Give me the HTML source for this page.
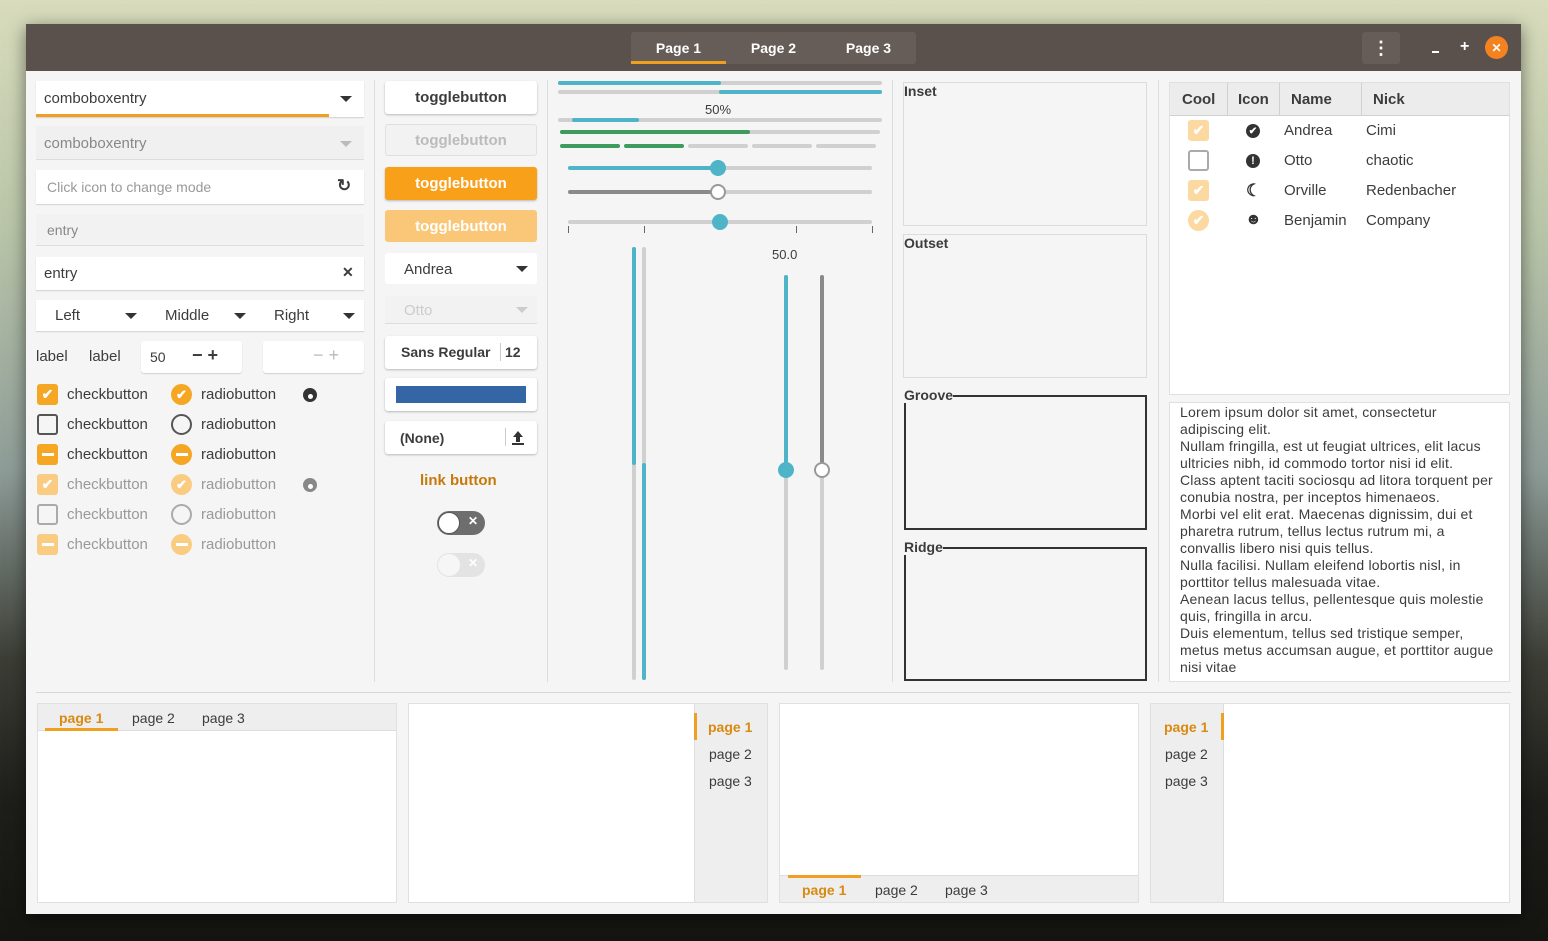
<!DOCTYPE html>
<html><head><meta charset="utf-8"><style>
*{box-sizing:border-box;margin:0;padding:0}
body{width:1548px;height:941px;overflow:hidden;position:relative;font-family:"Liberation Sans",sans-serif;font-size:14px;color:#3c3c3c;
background:linear-gradient(180deg,#d8dcbc 0%,#b8c4a8 25%,#8e9c98 50%,#3c3e36 70%,#1e1e1a 85%,#141410 100%)}
.a{position:absolute}
.win{left:26px;top:24px;width:1495px;height:890px;background:#f5f5f5;box-shadow:0 4px 16px rgba(0,0,0,.5)}
.tb{left:26px;top:24px;width:1495px;height:47px;background:#5a514c}
.btn{background:#fff;border-radius:3px;box-shadow:0 1px 2px rgba(0,0,0,.25);}
.wt{color:#fff;font-weight:bold;font-size:14px}
.ent{background:#fff;box-shadow:0 1px 1px rgba(0,0,0,.15)}
.c{display:flex;align-items:center;justify-content:center}
.tri{width:0;height:0;border-left:6px solid transparent;border-right:6px solid transparent;border-top:6px solid #333}
.cb{width:21px;height:21px;border-radius:3px}
.rb{width:21px;height:21px;border-radius:50%}
.bar{height:4px;border-radius:2px}
.b{font-weight:bold}
.frame{background:#f5f5f5;border:1px solid #dcdcdc}
</style></head><body>
<div class="a win"></div>
<div class="a tb"></div>
<div class="a" style="left:631px;top:32px;width:285px;height:32px;background:#665d58;border-radius:3px"></div>
<div class="a wt c" style="left:631px;top:32px;width:95px;height:32px">Page 1</div>
<div class="a" style="left:631px;top:61px;width:95px;height:3px;background:#f0a020"></div>
<div class="a wt c" style="left:726px;top:32px;width:95px;height:32px">Page 2</div>
<div class="a wt c" style="left:821px;top:32px;width:95px;height:32px">Page 3</div>
<div class="a c" style="left:1362px;top:32px;width:38px;height:32px;background:#665d58;border-radius:3px;color:#fff;font-weight:bold;font-size:18px">⋮</div>
<div class="a" style="left:1432px;top:51px;width:7px;height:2px;background:#fff"></div>
<div class="a wt" style="left:1460px;top:38px;font-size:16px">+</div>
<div class="a c" style="left:1485px;top:36px;width:23px;height:23px;border-radius:50%;background:#f58220;color:#fff;font-size:12px;font-weight:bold">✕</div>

<div class="a ent" style="left:36px;top:81px;width:328px;height:36px"></div>
<div class="a" style="left:36px;top:114px;width:293px;height:3px;background:#f0a020"></div>
<div class="a" style="left:44px;top:90px;font-size:15px">comboboxentry</div>
<div class="a tri" style="left:340px;top:96px"></div>
<div class="a" style="left:36px;top:126px;width:328px;height:34px;background:#f0f0f0;border-bottom:1px solid #ddd"></div>
<div class="a" style="left:44px;top:135px;font-size:15px;color:#888">comboboxentry</div>
<div class="a tri" style="left:340px;top:141px;border-top-color:#bbb"></div>
<div class="a ent" style="left:36px;top:170px;width:328px;height:34px"></div>
<div class="a" style="left:47px;top:179px;color:#999">Click icon to change mode</div>
<div class="a" style="left:337px;top:176px;font-size:17px;font-weight:bold">↻</div>
<div class="a" style="left:36px;top:214px;width:328px;height:32px;background:#f2f2f2;border-bottom:1px solid #ddd"></div>
<div class="a" style="left:47px;top:222px;color:#888">entry</div>
<div class="a ent" style="left:36px;top:257px;width:328px;height:33px"></div>
<div class="a" style="left:44px;top:265px;font-size:15px">entry</div>
<div class="a" style="left:342px;top:264px;font-weight:bold">✕</div>
<div class="a ent" style="left:36px;top:300px;width:328px;height:31px"></div>
<div class="a" style="left:55px;top:307px;font-size:15px">Left</div><div class="a tri" style="left:125px;top:313px"></div>
<div class="a" style="left:165px;top:307px;font-size:15px">Middle</div><div class="a tri" style="left:234px;top:313px"></div>
<div class="a" style="left:274px;top:307px;font-size:15px">Right</div><div class="a tri" style="left:343px;top:313px"></div>
<div class="a" style="left:36px;top:348px;font-size:15px">label</div>
<div class="a" style="left:89px;top:348px;font-size:15px">label</div>
<div class="a ent" style="left:141px;top:341px;width:101px;height:32px;border-radius:3px"></div>
<div class="a" style="left:150px;top:349px">50</div>
<div class="a b" style="left:192px;top:345px;font-size:18px">− +</div>
<div class="a ent" style="left:263px;top:341px;width:101px;height:32px;border-radius:3px"></div>
<div class="a" style="left:313px;top:345px;font-size:18px;color:#bbb">− +</div>

<div class="a cb c" style="left:37px;top:384px;background:#f5a623;color:#fff;font-size:14px;font-weight:bold">✔</div>
<div class="a cb" style="left:37px;top:414px;border:2px solid #555"></div>
<div class="a cb c" style="left:37px;top:444px;background:#f5a623"><div style="width:12px;height:3px;background:#fff"></div></div>
<div class="a cb c" style="left:37px;top:474px;background:#f9cc82;color:#fff;font-size:14px;font-weight:bold">✔</div>
<div class="a cb" style="left:37px;top:504px;border:2px solid #aaa"></div>
<div class="a cb c" style="left:37px;top:534px;background:#f9cc82"><div style="width:12px;height:3px;background:#fff"></div></div>
<div class="a" style="left:67px;top:380px;font-size:15px;line-height:30px">checkbutton<br>checkbutton<br>checkbutton</div>
<div class="a" style="left:67px;top:470px;font-size:15px;line-height:30px;color:#999">checkbutton<br>checkbutton<br>checkbutton</div>
<div class="a rb c" style="left:171px;top:384px;background:#f5a623;color:#fff;font-size:13px;font-weight:bold">✔</div>
<div class="a rb" style="left:171px;top:414px;border:2px solid #555"></div>
<div class="a rb c" style="left:171px;top:444px;background:#f5a623"><div style="width:12px;height:3px;background:#fff"></div></div>
<div class="a rb c" style="left:171px;top:474px;background:#f9cc82;color:#fff;font-size:13px;font-weight:bold">✔</div>
<div class="a rb" style="left:171px;top:504px;border:2px solid #aaa"></div>
<div class="a rb c" style="left:171px;top:534px;background:#f9cc82"><div style="width:12px;height:3px;background:#fff"></div></div>
<div class="a" style="left:201px;top:380px;font-size:15px;line-height:30px">radiobutton<br>radiobutton<br>radiobutton</div>
<div class="a" style="left:201px;top:470px;font-size:15px;line-height:30px;color:#999">radiobutton<br>radiobutton<br>radiobutton</div>
<div class="a" style="left:303px;top:388px;width:14px;height:14px;border-radius:50%;background:#333;border:4px solid #333"><div style="width:5px;height:5px;border-radius:50%;background:#fff;margin:2px 0 0 1px"></div></div>
<div class="a" style="left:303px;top:478px;width:14px;height:14px;border-radius:50%;background:#888;border:4px solid #888"><div style="width:5px;height:5px;border-radius:50%;background:#fff;margin:2px 0 0 1px"></div></div>

<div class="a" style="left:374px;top:80px;width:1px;height:602px;background:#ddd"></div>
<div class="a" style="left:547px;top:80px;width:1px;height:602px;background:#ddd"></div>
<div class="a" style="left:892px;top:80px;width:1px;height:602px;background:#ddd"></div>
<div class="a" style="left:1158px;top:80px;width:1px;height:602px;background:#ddd"></div>

<div class="a btn c b" style="left:385px;top:81px;width:152px;height:33px;font-size:15px">togglebutton</div>
<div class="a c b" style="left:385px;top:124px;width:152px;height:32px;font-size:15px;color:#bbb;border:1px solid #e0e0e0;border-radius:3px;background:#f2f2f2">togglebutton</div>
<div class="a btn c b" style="left:385px;top:167px;width:152px;height:33px;font-size:15px;background:#f9a01b;color:#fff">togglebutton</div>
<div class="a c b" style="left:385px;top:210px;width:152px;height:32px;font-size:15px;background:#f9c777;color:#fff;border-radius:3px">togglebutton</div>
<div class="a btn" style="left:385px;top:253px;width:152px;height:31px;box-shadow:none"></div>
<div class="a" style="left:404px;top:261px;font-size:15px">Andrea</div><div class="a tri" style="left:516px;top:266px"></div>
<div class="a" style="left:385px;top:296px;width:152px;height:28px;border-bottom:1px solid #ddd;background:#f2f2f2"></div>
<div class="a" style="left:404px;top:302px;color:#ccc;font-size:15px">Otto</div><div class="a tri" style="left:516px;top:307px;border-top-color:#ccc"></div>
<div class="a btn" style="left:385px;top:336px;width:152px;height:33px"></div>
<div class="a b" style="left:401px;top:344px">Sans Regular</div>
<div class="a" style="left:500px;top:343px;width:1px;height:18px;background:#ccc"></div>
<div class="a b" style="left:505px;top:344px">12</div>
<div class="a btn" style="left:385px;top:378px;width:152px;height:33px"></div>
<div class="a" style="left:396px;top:386px;width:130px;height:17px;background:#3465a4"></div>
<div class="a btn" style="left:385px;top:421px;width:152px;height:33px"></div>
<div class="a b" style="left:400px;top:430px">(None)</div>
<div class="a" style="left:505px;top:428px;width:1px;height:18px;background:#ccc"></div>
<svg class="a" style="left:511px;top:430px" width="14" height="15"><path d="M7 1 L12 7 H9 V12 H5 V7 H2 Z" fill="#333"/><rect x="1" y="13" width="12" height="2" fill="#333"/></svg>
<div class="a b" style="left:420px;top:472px;color:#c7780a;font-size:15px">link button</div>
<div class="a" style="left:437px;top:511px;width:48px;height:24px;border-radius:12px;background:#6e6e6e"></div>
<div class="a" style="left:438px;top:512px;width:22px;height:22px;border-radius:50%;background:#fff;border:1px solid #555"></div>
<div class="a b" style="left:468px;top:514px;color:#fff;font-size:12px">✕</div>
<div class="a" style="left:437px;top:553px;width:48px;height:24px;border-radius:12px;background:#e3e3e3"></div>
<div class="a" style="left:438px;top:554px;width:22px;height:22px;border-radius:50%;background:#f6f6f6"></div>
<div class="a b" style="left:468px;top:556px;color:#fff;font-size:12px">✕</div>

<div class="a bar" style="left:558px;top:81px;width:324px;background:#d0d0d0"></div>
<div class="a bar" style="left:558px;top:81px;width:163px;background:#4fb4c8"></div>
<div class="a bar" style="left:558px;top:90px;width:324px;background:#d0d0d0"></div>
<div class="a bar" style="left:719px;top:90px;width:163px;background:#4fb4c8"></div>
<div class="a" style="left:705px;top:102px;font-size:13px">50%</div>
<div class="a bar" style="left:558px;top:118px;width:324px;background:#d0d0d0"></div>
<div class="a bar" style="left:572px;top:118px;width:67px;background:#4fb4c8"></div>
<div class="a bar" style="left:560px;top:130px;width:320px;background:#d0d0d0"></div>
<div class="a bar" style="left:560px;top:130px;width:190px;background:#3f9a5e"></div>
<div class="a bar" style="left:560px;top:144px;width:60px;background:#3f9a5e"></div>
<div class="a bar" style="left:624px;top:144px;width:60px;background:#3f9a5e"></div>
<div class="a bar" style="left:688px;top:144px;width:60px;background:#d0d0d0"></div>
<div class="a bar" style="left:752px;top:144px;width:60px;background:#d0d0d0"></div>
<div class="a bar" style="left:816px;top:144px;width:60px;background:#d0d0d0"></div>
<div class="a bar" style="left:568px;top:166px;width:304px;background:#d0d0d0"></div>
<div class="a bar" style="left:568px;top:166px;width:150px;background:#4fb4c8"></div>
<div class="a" style="left:710px;top:160px;width:16px;height:16px;border-radius:50%;background:#4fb4c8"></div>
<div class="a bar" style="left:568px;top:190px;width:304px;background:#d0d0d0"></div>
<div class="a bar" style="left:568px;top:190px;width:150px;background:#8a8a8a"></div>
<div class="a" style="left:710px;top:184px;width:16px;height:16px;border-radius:50%;background:#fff;border:2px solid #999"></div>
<div class="a bar" style="left:568px;top:220px;width:304px;background:#d0d0d0"></div>
<div class="a" style="left:712px;top:214px;width:16px;height:16px;border-radius:50%;background:#4fb4c8"></div>
<div class="a" style="left:568px;top:226px;width:1px;height:7px;background:#666"></div>
<div class="a" style="left:644px;top:226px;width:1px;height:7px;background:#666"></div>
<div class="a" style="left:796px;top:226px;width:1px;height:7px;background:#666"></div>
<div class="a" style="left:872px;top:226px;width:1px;height:7px;background:#666"></div>
<div class="a" style="left:632px;top:247px;width:4px;height:433px;border-radius:2px;background:#d0d0d0"></div>
<div class="a" style="left:632px;top:247px;width:4px;height:218px;border-radius:2px;background:#4fb4c8"></div>
<div class="a" style="left:642px;top:247px;width:4px;height:433px;border-radius:2px;background:#d0d0d0"></div>
<div class="a" style="left:642px;top:463px;width:4px;height:217px;border-radius:2px;background:#4fb4c8"></div>
<div class="a" style="left:772px;top:247px;font-size:13px">50.0</div>
<div class="a" style="left:784px;top:275px;width:4px;height:395px;border-radius:2px;background:#d0d0d0"></div>
<div class="a" style="left:784px;top:275px;width:4px;height:195px;border-radius:2px;background:#4fb4c8"></div>
<div class="a" style="left:778px;top:462px;width:16px;height:16px;border-radius:50%;background:#4fb4c8"></div>
<div class="a" style="left:820px;top:275px;width:4px;height:395px;border-radius:2px;background:#d0d0d0"></div>
<div class="a" style="left:820px;top:275px;width:4px;height:195px;border-radius:2px;background:#8a8a8a"></div>
<div class="a" style="left:814px;top:462px;width:16px;height:16px;border-radius:50%;background:#fff;border:2px solid #999"></div>

<div class="a frame" style="left:903px;top:82px;width:244px;height:144px"></div>
<div class="a b" style="left:904px;top:83px">Inset</div>
<div class="a frame" style="left:903px;top:234px;width:244px;height:144px"></div>
<div class="a b" style="left:904px;top:235px">Outset</div>
<div class="a" style="left:904px;top:395px;width:243px;height:135px;border:2px solid #333"></div>
<div class="a b" style="left:904px;top:387px;background:#f5f5f5">Groove</div>
<div class="a" style="left:904px;top:547px;width:243px;height:134px;border:2px solid #333"></div>
<div class="a b" style="left:904px;top:539px;background:#f5f5f5">Ridge</div>

<div class="a" style="left:1169px;top:82px;width:341px;height:313px;background:#fff;border:1px solid #e0e0e0"></div>
<div class="a" style="left:1170px;top:83px;width:339px;height:33px;background:#ececec;border-bottom:1px solid #d0d0d0"></div>
<div class="a" style="left:1227px;top:83px;width:1px;height:33px;background:#d0d0d0"></div>
<div class="a" style="left:1279px;top:83px;width:1px;height:33px;background:#d0d0d0"></div>
<div class="a" style="left:1361px;top:83px;width:1px;height:33px;background:#d0d0d0"></div>
<div class="a b" style="left:1182px;top:91px;font-size:15px">Cool</div>
<div class="a b" style="left:1238px;top:91px;font-size:15px">Icon</div>
<div class="a b" style="left:1291px;top:91px;font-size:15px">Name</div>
<div class="a b" style="left:1373px;top:91px;font-size:15px">Nick</div>
<div class="a cb c" style="left:1188px;top:120px;background:#fbd9a0;color:#fff;font-weight:bold">✔</div>
<div class="a cb" style="left:1188px;top:150px;border:2px solid #aaa"></div>
<div class="a cb c" style="left:1188px;top:180px;background:#fbd9a0;color:#fff;font-weight:bold">✔</div>
<div class="a rb c" style="left:1188px;top:210px;background:#fbd9a0;color:#fff;font-weight:bold">✔</div>
<div class="a rb c" style="left:1246px;top:124px;width:14px;height:14px;background:#333;color:#fff;font-size:10px;font-weight:bold">✔</div>
<div class="a rb c" style="left:1246px;top:154px;width:14px;height:14px;background:#333;color:#fff;font-size:11px;font-weight:bold">!</div>
<div class="a" style="left:1246px;top:181px;font-size:17px;font-weight:bold;color:#333">☾</div>
<div class="a" style="left:1245px;top:211px;font-size:16px;color:#333">☻</div>
<div class="a" style="left:1284px;top:116px;font-size:15px;line-height:30px">Andrea<br>Otto<br>Orville<br>Benjamin</div>
<div class="a" style="left:1366px;top:116px;font-size:15px;line-height:30px">Cimi<br>chaotic<br>Redenbacher<br>Company</div>

<div class="a" style="left:1169px;top:402px;width:341px;height:280px;background:#fff;border:1px solid #e0e0e0;overflow:hidden;padding:1px 12px 0 10px;font-size:14px;line-height:17px;letter-spacing:0.2px">Lorem ipsum dolor sit amet, consectetur adipiscing elit.<br>Nullam fringilla, est ut feugiat ultrices, elit lacus ultricies nibh, id commodo tortor nisi id elit.<br>Class aptent taciti sociosqu ad litora torquent per conubia nostra, per inceptos himenaeos.<br>Morbi vel elit erat. Maecenas dignissim, dui et pharetra rutrum, tellus lectus rutrum mi, a convallis libero nisi quis tellus.<br>Nulla facilisi. Nullam eleifend lobortis nisl, in porttitor tellus malesuada vitae.<br>Aenean lacus tellus, pellentesque quis molestie quis, fringilla in arcu.<br>Duis elementum, tellus sed tristique semper, metus metus accumsan augue, et porttitor augue nisi vitae</div>

<div class="a" style="left:36px;top:692px;width:1475px;height:1px;background:#d8d8d8"></div>

<div class="a" style="left:37px;top:703px;width:360px;height:200px;background:#fff;border:1px solid #e0e0e0"></div>
<div class="a" style="left:38px;top:704px;width:358px;height:27px;background:#eeeeee;border-bottom:1px solid #ddd"></div>
<div class="a b" style="left:59px;top:710px;color:#d98a10">page 1</div>
<div class="a" style="left:45px;top:728px;width:73px;height:3px;background:#f0a020"></div>
<div class="a" style="left:132px;top:710px">page 2</div>
<div class="a" style="left:202px;top:710px">page 3</div>

<div class="a" style="left:408px;top:703px;width:360px;height:200px;background:#fff;border:1px solid #e0e0e0"></div>
<div class="a" style="left:694px;top:704px;width:73px;height:198px;background:#eeeeee;border-left:1px solid #ddd"></div>
<div class="a" style="left:694px;top:713px;width:3px;height:27px;background:#f0a020"></div>
<div class="a b" style="left:708px;top:719px;color:#d98a10">page 1</div>
<div class="a" style="left:709px;top:746px">page 2</div>
<div class="a" style="left:709px;top:773px">page 3</div>

<div class="a" style="left:779px;top:703px;width:360px;height:200px;background:#fff;border:1px solid #e0e0e0"></div>
<div class="a" style="left:780px;top:875px;width:358px;height:27px;background:#eeeeee;border-top:1px solid #ddd"></div>
<div class="a" style="left:788px;top:875px;width:73px;height:3px;background:#f0a020"></div>
<div class="a b" style="left:802px;top:882px;color:#d98a10">page 1</div>
<div class="a" style="left:875px;top:882px">page 2</div>
<div class="a" style="left:945px;top:882px">page 3</div>

<div class="a" style="left:1150px;top:703px;width:360px;height:200px;background:#fff;border:1px solid #e0e0e0"></div>
<div class="a" style="left:1151px;top:704px;width:73px;height:198px;background:#eeeeee;border-right:1px solid #ddd"></div>
<div class="a" style="left:1221px;top:713px;width:3px;height:27px;background:#f0a020"></div>
<div class="a b" style="left:1164px;top:719px;color:#d98a10">page 1</div>
<div class="a" style="left:1165px;top:746px">page 2</div>
<div class="a" style="left:1165px;top:773px">page 3</div>
</body></html>
